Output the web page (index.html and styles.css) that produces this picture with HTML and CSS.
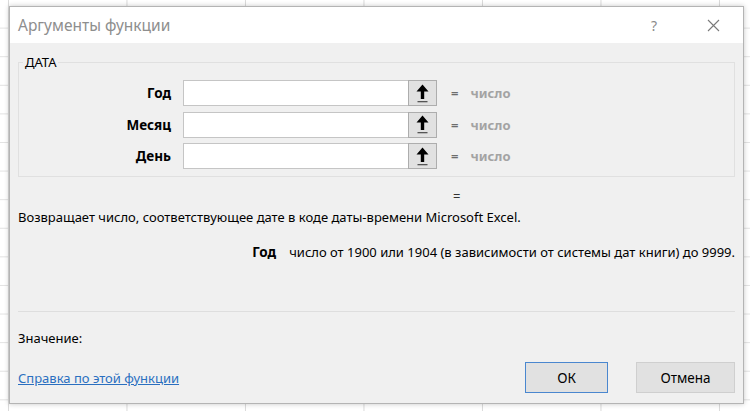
FILE: index.html
```html
<!DOCTYPE html>
<html lang="ru">
<head>
<meta charset="utf-8">
<title>Аргументы функции</title>
<link rel="stylesheet" href="styles.css">
</head>
<body>
<div class="sheet">
  <div class="dialog">
    <div class="titlebar">
      <span class="title">Аргументы функции</span>
      <div class="title-actions">
        <span class="help">?</span>
        <svg class="close" width="13" height="13" viewBox="0 0 13 13"><path d="M1 1 L12 12 M12 1 L1 12" stroke="#7a7a7a" stroke-width="1.1" fill="none"/></svg>
      </div>
    </div>
    <div class="content">
      <fieldset class="group">
        <legend>ДАТА</legend>
        <div class="args">
          <div class="arg">
            <span class="arg-name">Год</span>
            <span class="field"></span>
            <span class="pick"><svg width="13" height="19" viewBox="0 0 13 19"><path d="M6.5 0.5 L12.5 7.5 L8.2 7.5 L8.2 15 L4.8 15 L4.8 7.5 L0.5 7.5 Z" fill="#000"/><rect x="1.5" y="17" width="10" height="1.3" fill="#555"/></svg></span>
            <span class="eq">=</span>
            <span class="val">число</span>
          </div>
          <div class="arg">
            <span class="arg-name">Месяц</span>
            <span class="field"></span>
            <span class="pick"><svg width="13" height="19" viewBox="0 0 13 19"><path d="M6.5 0.5 L12.5 7.5 L8.2 7.5 L8.2 15 L4.8 15 L4.8 7.5 L0.5 7.5 Z" fill="#000"/><rect x="1.5" y="17" width="10" height="1.3" fill="#555"/></svg></span>
            <span class="eq">=</span>
            <span class="val">число</span>
          </div>
          <div class="arg">
            <span class="arg-name">День</span>
            <span class="field"></span>
            <span class="pick"><svg width="13" height="19" viewBox="0 0 13 19"><path d="M6.5 0.5 L12.5 7.5 L8.2 7.5 L8.2 15 L4.8 15 L4.8 7.5 L0.5 7.5 Z" fill="#000"/><rect x="1.5" y="17" width="10" height="1.3" fill="#555"/></svg></span>
            <span class="eq">=</span>
            <span class="val">число</span>
          </div>
        </div>
      </fieldset>
      <div class="result-eq">=</div>
      <div class="desc">Возвращает число, соответствующее дате в коде даты-времени Microsoft Excel.</div>
      <div class="arg-desc"><b>Год</b><span class="arg-text">число от 1900 или 1904 (в зависимости от системы дат книги) до 9999.</span></div>
      <div class="sep"></div>
      <div class="value">Значение:</div>
      <div class="footer">
        <a class="help-link" href="#">Справка по этой функции</a>
        <div class="buttons">
          <span class="btn btn-ok">ОК</span>
          <span class="btn btn-cancel">Отмена</span>
        </div>
      </div>
    </div>
  </div>
</div>
</body>
</html>
```
FILE: styles.css
```css
html, body {
  margin: 0;
  padding: 0;
}
body {
  width: 750px;
  height: 411px;
  overflow: hidden;
  font-family: "Noto Sans", "Open Sans", sans-serif;
  font-size: 13px;
  color: #000;
}
.sheet {
  width: 750px;
  height: 411px;
  background-color: #fff;
  background-image:
    repeating-linear-gradient(to right, transparent 0, transparent 8px, #dadada 8px, #dadada 9px, transparent 9px, transparent 118.5px),
    repeating-linear-gradient(to bottom, transparent 0, transparent 28px, #e2e2e2 28px, #e2e2e2 29px, transparent 29px, transparent 28.6px);
  background-size: 118.5px 100%, 100% 28.6px;
  padding-top: 6px;
  padding-left: 9px;
  box-sizing: border-box;
}
.dialog {
  width: 735px;
  height: 398px;
  box-sizing: border-box;
  border: 1px solid #b4b4b4;
  background: #f0f0f0;
  box-shadow: 0 0 5px rgba(0,0,0,0.22);
  display: flex;
  flex-direction: column;
}
.titlebar {
  height: 36px;
  background: #fff;
  display: flex;
  align-items: center;
  justify-content: space-between;
  padding-left: 8px;
  padding-right: 23px;
}
.title {
  font-size: 15.5px;
  color: #8e8e8e;
}
.title-actions {
  display: flex;
  align-items: center;
  gap: 50px;
}
.help {
  font-size: 14px;
  color: #8a8a8a;
}
.close {
  display: block;
}
.content {
  display: flex;
  flex-direction: column;
  padding: 0 8px 0 8px;
}
.group {
  margin: 10px 0 0 0;
  padding: 0 0 7px 0;
  border: 1px solid #e0e0e0;
  min-width: 0;
}
.group legend {
  margin-left: 4px;
  padding: 0 2px;
  line-height: 18px;
}
.args {
  padding-top: 9px;
  display: flex;
  flex-direction: column;
  gap: 5.5px;
}
.arg {
  display: flex;
  align-items: center;
  height: 26px;
}
.arg-name {
  width: 152px;
  text-align: right;
  font-weight: bold;
  font-size: 13.5px;
  margin-right: 12px;
}
.field {
  width: 225px;
  height: 26px;
  box-sizing: border-box;
  background: #fff;
  border: 1px solid #c5c5c5;
  border-right: none;
}
.pick {
  width: 29px;
  height: 26px;
  box-sizing: border-box;
  background: #e1e1e1;
  border: 1px solid #adadad;
  display: flex;
  align-items: center;
  justify-content: center;
}
.pick svg {
  display: block;
}
.eq {
  margin-left: 14px;
  color: #6d6d6d;
  font-weight: bold;
}
.val {
  margin-left: 12px;
  color: #a3a3a3;
  font-weight: bold;
}
.result-eq {
  margin-top: 10px;
  line-height: 18px;
  padding-left: 435px;
  color: #333;
}
.desc {
  margin-top: 3px;
  line-height: 18px;
}
.arg-desc {
  margin-top: 17px;
  line-height: 18px;
  text-align: right;
}
.arg-desc b {
  font-size: 13.5px;
}
.arg-text {
  margin-left: 13px;
}
.sep {
  margin-top: 50px;
  height: 1px;
  background: #dedede;
}
.value {
  margin-top: 17px;
  line-height: 18px;
}
.footer {
  margin-top: 15px;
  display: flex;
  justify-content: space-between;
  align-items: center;
}
.help-link {
  color: #2a6fc0;
  text-decoration: underline;
}
.buttons {
  display: flex;
  gap: 28px;
}
.btn {
  height: 31px;
  box-sizing: border-box;
  display: flex;
  align-items: center;
  justify-content: center;
  background: #e1e1e1;
  border: 1px solid #cfcfcf;
  font-size: 13.5px;
}
.btn-ok {
  width: 83px;
  border: 1px solid #4a87cf;
}
.btn-cancel {
  width: 99px;
}
```
